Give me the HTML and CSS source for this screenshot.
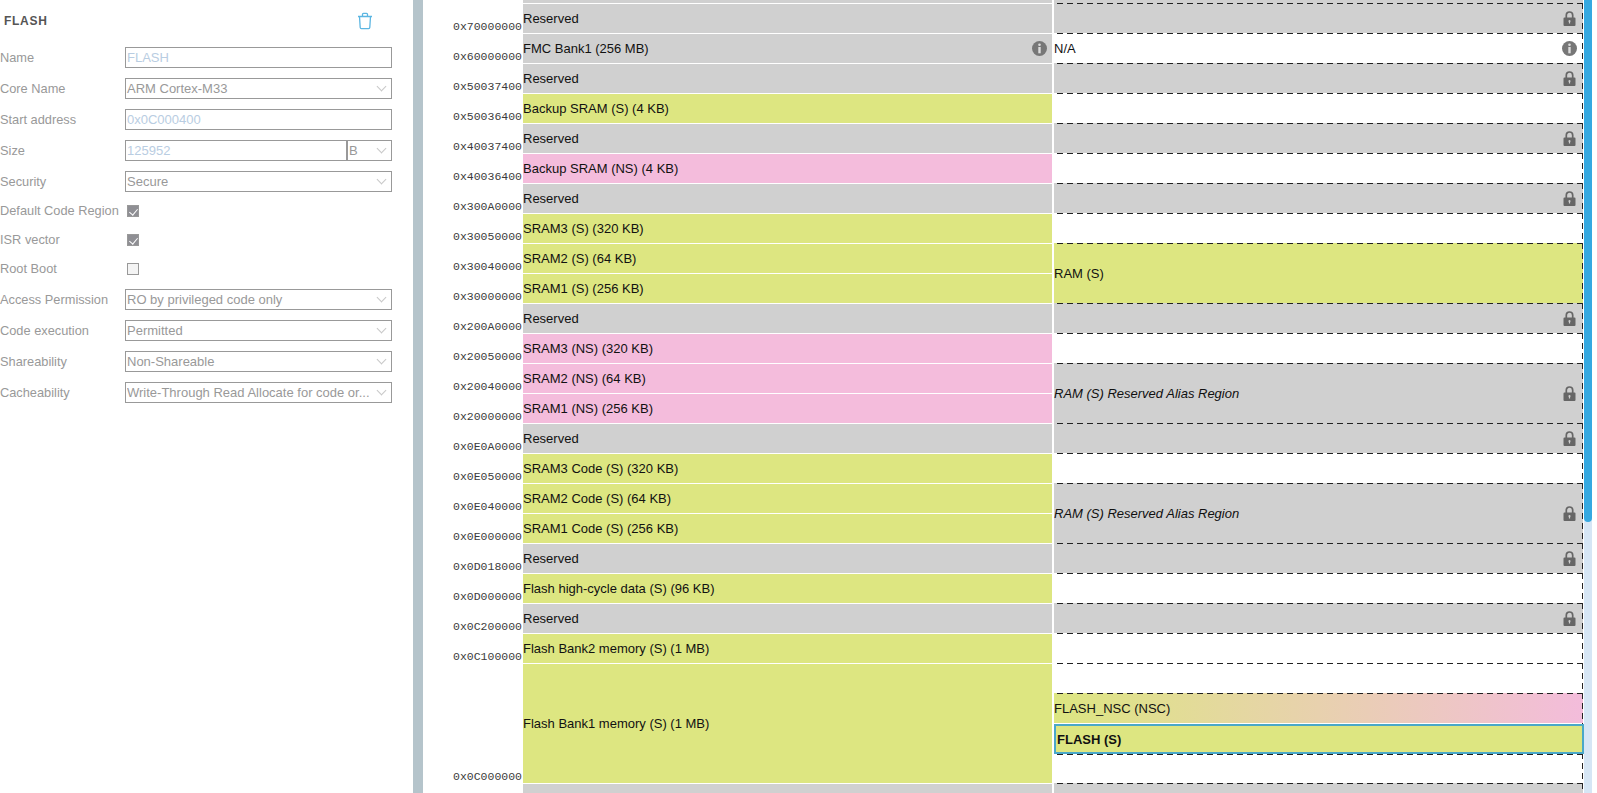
FILE: index.html
```html
<!DOCTYPE html>
<html lang="en">
<head>
<meta charset="utf-8">
<title>Memory map</title>
<link rel="stylesheet" href="styles.css">
</head>
<body>
<svg class="defs" width="0" height="0" aria-hidden="true">
  <symbol id="lock" viewBox="0 0 12 15"><path d="M2.800 7V4.200a3.200 3.200 0 0 1 6.400 0V7" fill="none" stroke="#666" stroke-width="1.700"/><path fill-rule="evenodd" fill="#666" d="M1 6.500h10a1 1 0 0 1 1 1v6.500a1 1 0 0 1-1 1H1a1 1 0 0 1-1-1V7.500a1 1 0 0 1 1-1zM6 9a1.100 1.100 0 0 0-.6 2v1.600h1.200V11A1.100 1.100 0 0 0 6 9z"/></symbol>
  <symbol id="info" viewBox="0 0 15 15"><circle cx="7.500" cy="7.500" r="7.500" fill="#777"/><circle cx="7.500" cy="3.800" r="1.300" fill="#ddd"/><path d="M6.300 6h2.400v6.300H6.300z" fill="#ddd"/></symbol>
</svg>
<div class="app">
  <aside class="panel">
    <header class="panel-head">
      <h2 class="panel-title">FLASH</h2>
      <svg class="trash" viewBox="0 0 16 18"><path d="M2.500 4.500h11l-.7 11a1.200 1.200 0 0 1-1.200 1.100H4.400a1.200 1.200 0 0 1-1.200-1.100zM1 4.500h14M5.500 4.500V2.300a1 1 0 0 1 1-1h3a1 1 0 0 1 1 1v2.200" fill="none" stroke="#5cb6e2" stroke-width="1.300"/></svg>
    </header>
    <div class="field"><span class="label">Name</span><div class="box muted">FLASH</div></div>
    <div class="field"><span class="label">Core Name</span><div class="box select">ARM Cortex-M33<i class="chev"></i></div></div>
    <div class="field"><span class="label">Start address</span><div class="box muted">0x0C000400</div></div>
    <div class="field"><span class="label">Size</span><div class="split"><div class="box muted grow">125952</div><div class="box select unit">B<i class="chev"></i></div></div></div>
    <div class="field"><span class="label">Security</span><div class="box select">Secure<i class="chev"></i></div></div>
    <div class="checks">
      <div class="check-row"><span class="label">Default Code Region</span><span class="check on"></span></div>
      <div class="check-row"><span class="label">ISR vector</span><span class="check on"></span></div>
      <div class="check-row"><span class="label">Root Boot</span><span class="check"></span></div>
    </div>
    <div class="field"><span class="label">Access Permission</span><div class="box select">RO by privileged code only<i class="chev"></i></div></div>
    <div class="field"><span class="label">Code execution</span><div class="box select">Permitted<i class="chev"></i></div></div>
    <div class="field"><span class="label">Shareability</span><div class="box select">Non-Shareable<i class="chev"></i></div></div>
    <div class="field"><span class="label">Cacheability</span><div class="box select"><span class="clip">Write-Through Read Allocate for code or...</span><i class="chev"></i></div></div>
  </aside>
  <div class="divider"></div>
  <main class="map">
    <div class="addrs">
      <div class="addr">0x70000000</div><div class="addr">0x60000000</div><div class="addr">0x50037400</div><div class="addr">0x50036400</div>
      <div class="addr">0x40037400</div><div class="addr">0x40036400</div><div class="addr">0x300A0000</div><div class="addr">0x30050000</div>
      <div class="addr">0x30040000</div><div class="addr">0x30000000</div><div class="addr">0x200A0000</div><div class="addr">0x20050000</div>
      <div class="addr">0x20040000</div><div class="addr">0x20000000</div><div class="addr">0x0E0A0000</div><div class="addr">0x0E050000</div>
      <div class="addr">0x0E040000</div><div class="addr">0x0E000000</div><div class="addr">0x0D018000</div><div class="addr">0x0D000000</div>
      <div class="addr">0x0C200000</div><div class="addr">0x0C100000</div><div class="addr h4">0x0C000000</div>
    </div>
    <div class="regions">
      <div class="reg stub grey"></div>
      <div class="reg grey">Reserved</div>
      <div class="reg grey">FMC Bank1 (256 MB)<svg class="ico"><use href="#info"/></svg></div>
      <div class="reg grey">Reserved</div>
      <div class="reg green">Backup SRAM (S) (4 KB)</div>
      <div class="reg grey">Reserved</div>
      <div class="reg pink">Backup SRAM (NS) (4 KB)</div>
      <div class="reg grey">Reserved</div>
      <div class="reg green">SRAM3 (S) (320 KB)</div>
      <div class="reg green">SRAM2 (S) (64 KB)</div>
      <div class="reg green">SRAM1 (S) (256 KB)</div>
      <div class="reg grey">Reserved</div>
      <div class="reg pink">SRAM3 (NS) (320 KB)</div>
      <div class="reg pink">SRAM2 (NS) (64 KB)</div>
      <div class="reg pink">SRAM1 (NS) (256 KB)</div>
      <div class="reg grey">Reserved</div>
      <div class="reg green">SRAM3 Code (S) (320 KB)</div>
      <div class="reg green">SRAM2 Code (S) (64 KB)</div>
      <div class="reg green">SRAM1 Code (S) (256 KB)</div>
      <div class="reg grey">Reserved</div>
      <div class="reg green">Flash high-cycle data (S) (96 KB)</div>
      <div class="reg grey">Reserved</div>
      <div class="reg green">Flash Bank2 memory (S) (1 MB)</div>
      <div class="reg green h4">Flash Bank1 memory (S) (1 MB)</div>
      <div class="reg grey"></div>
    </div>
    <div class="layout">
      <div class="stub3 grey"></div>
      <div class="slot grey"><svg class="ico"><use href="#lock"/></svg></div>
      <div class="slot">N/A<svg class="ico"><use href="#info"/></svg></div>
      <div class="slot grey"><svg class="ico"><use href="#lock"/></svg></div>
      <div class="slot"></div>
      <div class="slot grey"><svg class="ico"><use href="#lock"/></svg></div>
      <div class="slot"></div>
      <div class="slot grey"><svg class="ico"><use href="#lock"/></svg></div>
      <div class="slot"></div>
      <div class="slot green h2">RAM (S)</div>
      <div class="slot grey"><svg class="ico"><use href="#lock"/></svg></div>
      <div class="slot"></div>
      <div class="slot grey h2 alias">RAM (S) Reserved Alias Region<svg class="ico"><use href="#lock"/></svg></div>
      <div class="slot grey"><svg class="ico"><use href="#lock"/></svg></div>
      <div class="slot"></div>
      <div class="slot grey h2 alias">RAM (S) Reserved Alias Region<svg class="ico"><use href="#lock"/></svg></div>
      <div class="slot grey"><svg class="ico"><use href="#lock"/></svg></div>
      <div class="slot"></div>
      <div class="slot grey"><svg class="ico"><use href="#lock"/></svg></div>
      <div class="slot"></div>
      <div class="slot"></div>
      <div class="slot nsc">FLASH_NSC (NSC)</div>
      <div class="selected">FLASH (S)</div>
      <div class="slot after-selected"></div>
      <div class="slot grey"></div>
    </div>
    <div class="scrollbar"><div class="thumb"></div></div>
  </main>
</div>
</body>
</html>
```
FILE: styles.css
```css
* { box-sizing: border-box; }
html, body { margin: 0; height: 100%; overflow: hidden; background: #fff; }
body { font-family: "Liberation Sans", Arial, sans-serif; font-size: 13px; color: #111; }
.defs { position: absolute; }

.app { display: flex; height: 793px; }

.grey { background-color: #d0d0d0; }
.green { background-color: #dde681; }
.pink { background-color: #f4bcdc; }

/* left property panel */
.panel { width: 413px; flex: none; padding-right: 21px; }
.panel-head { display: flex; justify-content: space-between; align-items: center; height: 47px; padding: 0 19px 5px 4px; }
.panel-title { margin: 0; font-size: 12px; font-weight: bold; letter-spacing: .7px; color: #555; }
.trash { width: 16px; height: 18px; }
.field { display: flex; align-items: center; height: 21px; margin-bottom: 10px; }
.label { width: 125px; flex: none; color: #999; white-space: nowrap; font-size: 12.8px; }
.box { flex: 1; min-width: 0; height: 21px; border: 1px solid #999; padding: 0 1px; line-height: 19px; color: #999; position: relative; white-space: nowrap; }
.muted { color: #b9cde2; }
.select { padding-right: 22px; }
.clip { display: block; overflow: hidden; }
.split { display: flex; flex: 1; }
.grow { flex: 1; }
.unit { flex: none; width: 46px; border-left-width: 2px; margin-left: -1px; }
.chev { position: absolute; right: 6px; top: 4px; width: 7px; height: 7px; border-right: 1px solid #c8c8c8; border-bottom: 1px solid #c8c8c8; transform: rotate(45deg); }
.checks { margin: -6px 0 6px; }
.check-row { display: flex; align-items: center; height: 29px; }
.check { width: 12px; height: 12px; margin-left: 2px; border: 1px solid #999; background: #f4f4f4; position: relative; }
.check.on { background: #8f8f94; }
.check.on::after { content: ""; position: absolute; left: 3px; top: 1px; width: 4px; height: 7px; border-right: 1px solid #fff; border-bottom: 1px solid #fff; transform: rotate(40deg); }

.divider { width: 10px; flex: none; background: #b5c4cb; }

/* memory map */
.map { flex: 1; display: flex; min-width: 0; }
.addrs { width: 100px; flex: none; padding-top: 4px; }
.addr { height: 30px; display: flex; align-items: flex-end; justify-content: flex-end; padding-right: 1px; font-family: "Liberation Mono", monospace; font-size: 11.5px; line-height: 13px; color: #3c3c3c; position: relative; top: -1px; }
.addr.h4 { height: 120px; }

.regions { width: 529px; flex: none; }
.reg { height: 30px; border-bottom: 1px solid #fff; display: flex; align-items: center; justify-content: space-between; padding-right: 5px; }
.reg.stub { height: 4px; }
.reg:last-child { border-bottom: 0; }
.reg.h4 { height: 120px; }

.layout { width: 529px; flex: none; margin-left: 2px; position: relative; height: 793px; overflow: visible; }
.layout::after { content: ""; position: absolute; right: 0; top: 3px; bottom: 0; width: 1px; background: repeating-linear-gradient(180deg, #222 0 6px, transparent 6px 10px); }
.stub3 { height: 3px; }
.slot { height: 30px; display: flex; align-items: center; justify-content: space-between; padding-right: 6px;
  background-image: repeating-linear-gradient(90deg, transparent 0 3px, #222 3px 9px, transparent 9px 10px);
  background-size: 100% 1px; background-position: 0 0; background-repeat: no-repeat; }
.slot .ico:only-child { margin-left: auto; }
.slot.h2 { height: 60px; }
.slot.alias { font-style: italic; }
.slot.nsc { background-image: repeating-linear-gradient(90deg, transparent 0 3px, #222 3px 9px, transparent 9px 10px), linear-gradient(90deg, #dde681, #f3bcdb); background-size: 100% 1px, 100% 100%; }
.selected { background: #dde681; border: 2px solid #4aa8c8; font-weight: bold; padding-left: 1px; line-height: 27px; margin-top: 1px; height: 30px; width: 530px; position: relative; z-index: 1; }
.after-selected { height: 29px; }
.ico { width: 15px; height: 15px; flex: none; }

.scrollbar { width: 8px; flex: none; margin-left: 1px; background: #d6e6f5; height: 793px; }
.thumb { height: 522px; background: #35a9e1; border-radius: 0 0 4px 4px; }
```
